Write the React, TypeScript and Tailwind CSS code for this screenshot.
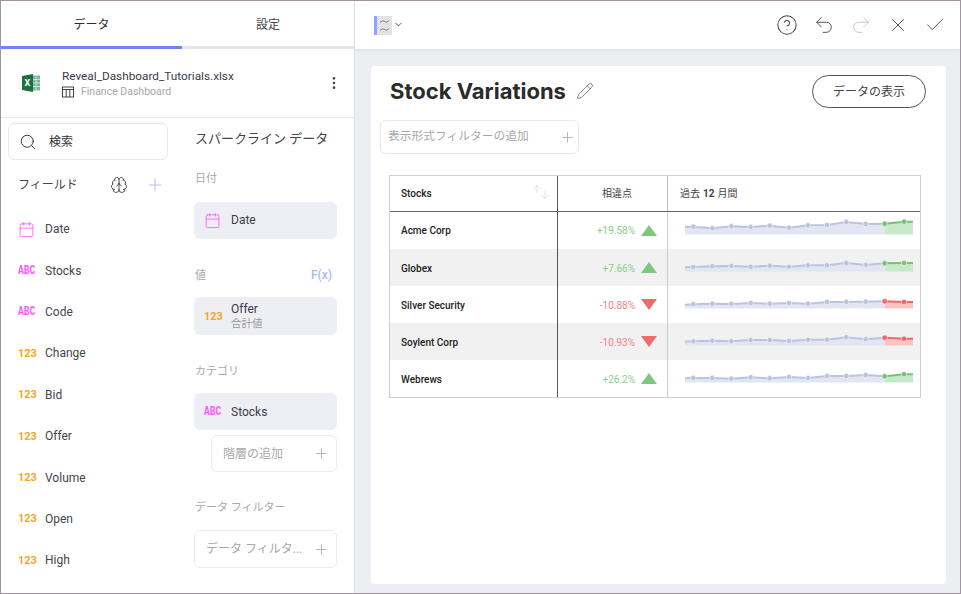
import React from 'react';
import { Search, Brain, Plus, Calendar, CircleHelp, Undo2, Redo2, X, Check, Pencil, EllipsisVertical, ChevronDown, ArrowUp, ArrowDown } from 'lucide-react';

const font = { fontFamily: '"Roboto", "Noto Sans CJK JP", sans-serif' };

const xs = [0, 8.3, 27.3, 46.3, 65.7, 84.7, 104, 123, 142, 161.3, 180.7, 199.7, 219, 228];

const rows = [
    { name: 'Acme Corp', pct: '+19.58%', up: true, ys: [7.7, 7.7, 9.3, 7.3, 8, 6.7, 8.7, 6.3, 6, 3, 5, 4.7, 2.7, 2.7] },
    { name: 'Globex', pct: '+7.66%', up: true, ys: [11.3, 11, 10.3, 10, 10.7, 9.7, 10.7, 9.3, 9.3, 7, 9, 7.3, 7, 7] },
    { name: 'Silver Security', pct: '-10.88%', up: false, ys: [11.7, 11.3, 10.7, 11, 10, 10.7, 10, 10.7, 9, 9, 8.7, 8.3, 9, 9] },
    { name: 'Soylent Corp', pct: '-10.93%', up: false, ys: [11.7, 11.3, 10.7, 11.3, 10, 10, 11, 9.7, 9.7, 7.3, 9.3, 7.7, 8.7, 8.7] },
    { name: 'Webrews', pct: '+26.2%', up: true, ys: [11.3, 11, 11, 11.7, 10.3, 11.3, 10, 11, 9, 9, 8, 9.3, 7.3, 7.3] },
];

const fields = [
    ['date', 'Date'], ['abc', 'Stocks'], ['abc', 'Code'], ['num', 'Change'], ['num', 'Bid'],
    ['num', 'Offer'], ['num', 'Volume'], ['num', 'Open'], ['num', 'High'],
];

const FieldIcon = ({ type }: { type: string }) => {
    if (type === 'date') return <Calendar size={17} strokeWidth={1.2} className="text-[#fa5cfa]" />;
    if (type === 'abc') return <span className="text-[12px] font-bold text-[#fa5cfa] leading-none scale-x-[0.8] origin-left" style={{ fontFamily: '"Liberation Mono", monospace' }}>ABC</span>;
    return <span className="text-[11px] font-bold text-[#f5a623] leading-none">123</span>;
};

const Spark = ({ ys, up }: { ys: number[]; up: boolean }) => {
    const line = xs.map((x, i) => `${x},${ys[i]}`);
    const hot = up ? '#74c476' : '#ee6666';
    const hotArea = up ? '#c8e8c9' : '#f8c4c4';
    return (
        <svg width="228" height="16" viewBox="0 0 228 16" className="block">
            <polygon points={`0,15.5 ${line.slice(0, 12).join(' ')} 199.7,15.5`} fill="#e3e5f1" />
            <polygon points={`199.7,15.5 ${line.slice(11).join(' ')} 228,15.5`} fill={hotArea} />
            <polyline points={line.slice(0, 12).join(' ')} fill="none" stroke="#bcc3e0" strokeWidth="2" />
            <polyline points={line.slice(11).join(' ')} fill="none" stroke={hot} strokeWidth="2" />
            {xs.slice(1, 13).map((x, i) => (
                <circle key={x} cx={x} cy={ys[i + 1]} r="2.7" fill={i >= 10 ? hot : '#bcc3e0'} stroke="#ffffff" strokeOpacity="0.7" strokeWidth="0.8" />
            ))}
        </svg>
    );
};

const App: React.FC = () => {
    return (
        <div className="w-[961px] h-[594px] border border-[#a3929f] flex overflow-hidden bg-[#eceef3] text-[#3c3c46]" style={font}>
            {/* left panel */}
            <div className="w-[353px] h-full bg-white flex flex-col shrink-0">
                <div className="h-[48px] flex text-[12px] shrink-0">
                    <div className="w-[181px] border-b-[3px] border-[#6b85f3] flex items-center justify-center pt-[3px] text-[#2c2c2c]">データ</div>
                    <div className="flex-1 border-b-[3px] border-[#e6e6e6] flex items-center justify-center pt-[3px] text-[#444]">設定</div>
                </div>
                <div className="h-[69px] border-b border-[#e9e9ee] flex items-center pl-[20px] pr-[12px] shrink-0">
                    <svg width="20" height="20" viewBox="0 0 20 20" className="shrink-0">
                        <rect x="7" y="2.5" width="12" height="15" fill="#7fb596" />
                        <path d="M11 2.5v15M15 2.5v15M7 6.5h12M7 10h12M7 13.5h12" stroke="#e6f1ea" strokeWidth="0.7" />
                        <polygon points="1,3 12,1 12,19 1,17" fill="#1d7044" />
                        <text x="6.4" y="13.4" fontSize="9" fontWeight="700" fill="#ffffff" textAnchor="middle" fontFamily="Roboto">X</text>
                    </svg>
                    <div className="ml-[21px] flex-1">
                        <div className="text-[11.8px] leading-[16px] text-[#3c3c46]">Reveal_Dashboard_Tutorials.xlsx</div>
                        <div className="flex items-center mt-[1px] text-[10.5px] leading-[14px] text-[#a6a6ad]">
                            <svg width="12" height="12" viewBox="0 0 12 12" className="mr-[7px]" fill="none" stroke="#444" strokeWidth="1">
                                <rect x="0.5" y="1" width="11" height="10" />
                                <path d="M0.5 3.500h11M4.200 3.500v7.500M7.800 3.500v7.500" />
                            </svg>
                            Finance Dashboard
                        </div>
                    </div>
                    <EllipsisVertical size={16} strokeWidth={2} className="text-[#444] mb-[1px]" />
                </div>
                <div className="flex flex-1 min-h-0">
                    {/* fields */}
                    <div className="w-[185px] shrink-0 pl-[7px] pt-[5px]">
                        <div className="w-[160px] h-[37px] border border-[#e8e8ec] rounded-[6px] flex items-center pl-[10px] text-[12px] text-[#333]">
                            <Search size={18} strokeWidth={1.3} className="text-[#333]" />
                            <span className="ml-[12px]">検索</span>
                        </div>
                        <div className="h-[48.5px] flex items-center pl-[10px] pt-[2px] text-[12px] text-[#444]">
                            <span className="w-[92px]">フィールド</span>
                            <Brain size={18} strokeWidth={1.2} className="text-[#444]" />
                            <Plus size={20} strokeWidth={1.1} className="text-[#a9b8f8] ml-[17px]" />
                        </div>
                        {fields.map(([type, label]) => (
                            <div key={label} className="h-[41.4px] flex items-center pl-[10px] text-[12px] text-[#45454f]">
                                <span className="w-[27px] flex items-center"><FieldIcon type={type} /></span>
                                {label}
                            </div>
                        ))}
                    </div>
                    {/* data */}
                    <div className="w-[143px] shrink-0 ml-[8px] pt-[11px] flex flex-col">
                        <div className="text-[13px] leading-[20px] pl-[1px] text-[#444] whitespace-nowrap">スパークライン データ</div>
                        <div className="text-[11px] leading-[14px] mt-[23px] pl-[1px] text-[#a8a8a8]">日付</div>
                        <div className="h-[37px] mt-[16px] bg-[#eeeff5] rounded-[6px] flex items-center pl-[10px] text-[12px] text-[#3c3c46]">
                            <span className="w-[27px] flex items-center"><FieldIcon type="date" /></span>
                            <span className="mt-[-2px]">Date</span>
                        </div>
                        <div className="flex justify-between items-center text-[11px] leading-[14px] mt-[30px] pl-[1px] pr-[5px] text-[#a8a8a8]">
                            <span>値</span>
                            <span className="text-[12px] font-medium text-[#a9b8f8] mt-[-2px]">F(x)</span>
                        </div>
                        <div className="h-[38px] mt-[14px] bg-[#eeeff5] rounded-[6px] flex items-center pl-[10px] text-[12px] text-[#3c3c46]">
                            <span className="w-[27px] flex items-center"><FieldIcon type="num" /></span>
                            <div>
                                <div className="leading-[15px]">Offer</div>
                                <div className="text-[10.5px] leading-[13px] text-[#999]">合計値</div>
                            </div>
                        </div>
                        <div className="text-[11px] leading-[14px] mt-[30px] pl-[1px] text-[#a8a8a8]">カテゴリ</div>
                        <div className="h-[37px] mt-[14px] bg-[#eeeff5] rounded-[6px] flex items-center pl-[10px] text-[12px] text-[#3c3c46]">
                            <span className="w-[27px] flex items-center"><FieldIcon type="abc" /></span>
                            Stocks
                        </div>
                        <div className="h-[37px] mt-[5px] ml-[17px] border border-[#ececf0] rounded-[6px] flex items-center justify-between pl-[11px] pr-[6px] text-[12px] text-[#a8a8a8]">
                            階層の追加
                            <Plus size={17} strokeWidth={1.2} className="text-[#a8a8a8]" />
                        </div>
                        <div className="text-[11px] leading-[14px] mt-[29px] pl-[1px] text-[#a8a8a8]">データ フィルター</div>
                        <div className="h-[38px] mt-[15px] border border-[#ececf0] rounded-[6px] flex items-center justify-between pl-[11px] pr-[6px] text-[12px] text-[#a8a8a8]">
                            <span>データ フィルタ...</span>
                            <Plus size={17} strokeWidth={1.2} className="text-[#a8a8a8]" />
                        </div>
                    </div>
                </div>
            </div>

            {/* right side */}
            <div className="flex-1 flex flex-col border-l border-[#e4e4e8] min-w-0">
                <div className="h-[48px] bg-white flex items-center pl-[19px] shadow-[0_1px_3px_rgba(0,0,0,0.08)] shrink-0">
                    <svg width="18" height="19" viewBox="0 0 18 19">
                        <rect x="0" y="0" width="18" height="19" fill="#e2e2e2" />
                        <rect x="0" y="0" width="3" height="19" rx="1" fill="#8ea2fa" />
                        <path d="M6 6.500q2.500-3 4.500-1t4.500-1M6 14.500q2.500-3 4.500-1t4.500-1" fill="none" stroke="#777" strokeWidth="0.9" />
                    </svg>
                    <ChevronDown size={11} strokeWidth={1.8} className="text-[#444] ml-[1px] mt-[-2px]" />
                    <div className="ml-auto flex items-center pr-[14px] gap-[15px] text-[#444]">
                        <CircleHelp size={22} strokeWidth={1.1} />
                        <Undo2 size={22} strokeWidth={1} />
                        <Redo2 size={22} strokeWidth={1} className="text-[#c4c4c4]" />
                        <X size={22} strokeWidth={1} />
                        <Check size={22} strokeWidth={1} />
                    </div>
                </div>
                <div className="flex-1 pl-[16px] pr-[14px] pt-[17px] pb-[9px] min-h-0">
                    <div className="h-full bg-white rounded-[4px] pt-[9px] px-[9px]">
                        <div className="flex items-center justify-between pr-[11px] h-[33px]">
                            <div className="flex items-center pl-[10px] mt-[-2px]">
                                <span className="text-[22px] leading-[32px] font-bold text-[#2b2b2b]" style={{ fontFamily: '"Inter", sans-serif' }}>Stock Variations</span>
                                <Pencil size={18} strokeWidth={1.1} className="text-[#666] ml-[10px]" />
                            </div>
                            <div className="w-[114px] h-[33px] rounded-full border border-[#555] flex items-center justify-center text-[12px] text-[#444]">データの表示</div>
                        </div>
                        <div className="w-[199px] h-[34px] mt-[12px] border border-[#e8e8ec] rounded-[6px] flex items-center justify-between pl-[7px] pr-[2px] text-[11.75px] text-[#a8a8a8]">
                            表示形式フィルターの追加
                            <Plus size={17} strokeWidth={1.1} className="text-[#a8a8a8]" />
                        </div>
                        <div className="w-[532px] ml-[9px] mt-[21px] border border-[#cfcfcf] text-[10px]">
                            <div className="h-[36px] flex border-b border-[#666]">
                                <div className="w-[168px] border-r border-[#555] flex items-center justify-between pl-[11px] pr-[6px] font-medium text-[#222]">
                                    Stocks
                                    <span className="flex text-[#c4c4c4]">
                                        <ArrowUp size={12} strokeWidth={1} className="mt-[-3px]" />
                                        <ArrowDown size={12} strokeWidth={1} className="ml-[-4px] mt-[3px]" />
                                    </span>
                                </div>
                                <div className="w-[110px] border-r border-[#bbb] flex items-center justify-center pl-[9px] text-[#444]">相違点</div>
                                <div className="flex-1 flex items-center pl-[12px] text-[#444]">過去 <b className="font-bold mx-[3px]">12</b> 月間</div>
                            </div>
                            {rows.map((r, i) => (
                                <div key={r.name} className={`h-[37px] flex ${i % 2 === 1 ? 'bg-[#f1f1f1]' : 'bg-white'}`}>
                                    <div className={`w-[168px] border-r border-[#555] flex items-center pl-[11px] font-medium text-[#222] ${i > 0 ? 'pt-[2px]' : ''}`}>{r.name}</div>
                                    <div className={`w-[110px] border-r border-[#ccc] flex items-center justify-end pr-[10px] ${r.up ? 'text-[#86cf8a]' : 'text-[#f08484]'}`}>
                                        <span className={i > 0 ? 'pt-[2px]' : ''}>{r.pct}</span>
                                        {r.up ? (
                                            <span className="ml-[6px] w-0 h-0 border-l-[8px] border-r-[8px] border-b-[11px] border-l-transparent border-r-transparent border-b-[#7fc77f]" />
                                        ) : (
                                            <span className="ml-[6px] w-0 h-0 border-l-[8px] border-r-[8px] border-t-[11px] border-l-transparent border-r-transparent border-t-[#ee6b6b]" />
                                        )}
                                    </div>
                                    <div className="flex-1 pl-[17px] pt-[7px]"><Spark ys={r.ys} up={r.up} /></div>
                                </div>
                            ))}
                        </div>
                    </div>
                </div>
            </div>
        </div>
    );
};

export default App;
